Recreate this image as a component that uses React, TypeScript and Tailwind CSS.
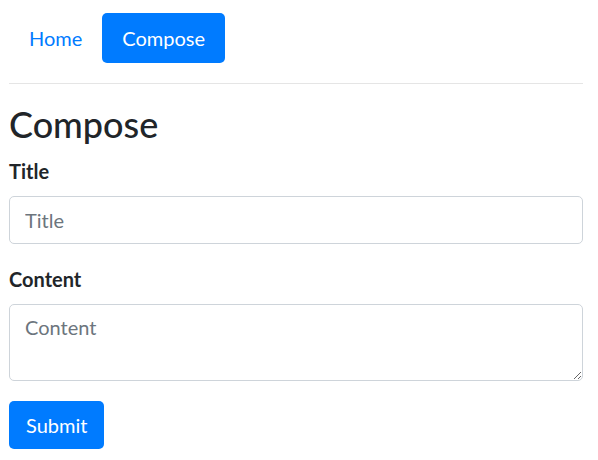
export default function App() {
  return (
    <div className="min-h-screen bg-white pl-[9px] pr-[15px] text-[#212529]" style={{ fontFamily: 'Lato, "Open Sans", sans-serif' }}>
      {/* Nav */}
      <nav className="flex pt-[13px]">
        <a href="#" className="rounded-[5px] px-5 py-[10px] text-[20px] leading-[30px] text-[#007bff]">
          Home
        </a>
        <a href="#" className="rounded-[5px] bg-[#007bff] px-5 py-[10px] text-[20px] leading-[30px] text-white">
          Compose
        </a>
      </nav>

      <hr className="mt-5 mb-4 border-t border-black/10" />

      <h1 className="mb-[8px] text-[36px] leading-[48px] font-medium">Compose</h1>

      <form onSubmit={(e) => e.preventDefault()}>
        <div className="mb-5">
          <label className="mb-[10px] block text-[20px] leading-[30px] font-bold">Title</label>
          <input
            placeholder="Title"
            className="block h-[48px] w-full rounded-[5px] border border-[#ced4da] px-[15px] text-[20px] leading-[30px] placeholder:text-[#6c757d] focus:outline-none"
          />
        </div>
        <div className="mb-5">
          <label className="mb-[10px] block text-[20px] leading-[30px] font-bold">Content</label>
          <textarea
            placeholder="Content"
            rows={2}
            className="block h-[77px] w-full rounded-[5px] border border-[#ced4da] px-[15px] py-[7px] text-[20px] leading-[30px] placeholder:text-[#6c757d] focus:outline-none"
          />
        </div>
        <button type="submit" className="h-[48px] rounded-[5px] bg-[#007bff] px-[17px] text-[20px] leading-[30px] text-white">
          Submit
        </button>
      </form>
    </div>
  )
}
